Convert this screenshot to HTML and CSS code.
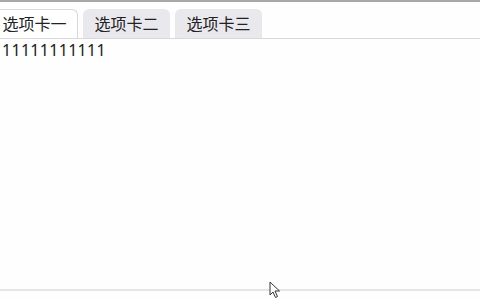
FILE: index.html
```html
<!DOCTYPE html>
<html lang="zh">
<head>
    <meta charset="UTF-8">
    <meta name="viewport" content="width=device-width, initial-scale=1.0">
    <title>选项卡</title>
    <link rel="stylesheet" href="styles.css">
</head>
<body>
    <div class="page">
        <div class="tab-bar">
            <div class="tabs">
                <button class="tab-button active">选项卡一</button>
                <button class="tab-button">选项卡二</button>
                <button class="tab-button">选项卡三</button>
            </div>
        </div>
        <div class="tab-content">11111111111</div>
        <div class="footer-line"></div>
    </div>

    <svg class="cursor" width="12" height="18" viewBox="0 0 12 18">
        <path d="M1 1 L1 14 L4 11 L6.5 16.5 L8.5 15.5 L6 10 L10.5 10 Z" fill="#fff" stroke="#333" stroke-width="1"/>
    </svg>
</body>
</html>
```

FILE: styles.css
```css
* {
    box-sizing: border-box;
    margin: 0;
    padding: 0;
}

body {
    font-family: "Noto Sans", "Noto Sans CJK SC", sans-serif;
    font-size: 16px;
    background: #fdfefd;
    color: #222;
    border-top: 2px solid #a8a8a8;
    height: 300px;
    overflow: hidden;
}

.page {
    display: flex;
    flex-direction: column;
    height: 298px;
}

.tab-bar {
    padding-top: 7px;
    border-bottom: 1px solid #d8d8de;
    overflow: hidden;
}

.tabs {
    display: flex;
    gap: 5px;
    margin-left: -9px;
}

.tab-button {
    font-family: inherit;
    font-size: 16px;
    line-height: 20px;
    padding: 4px 0 5px;
    width: 87px;
    white-space: nowrap;
    text-align: center;
    border: 1px solid #e8e8ec;
    border-bottom: none;
    border-radius: 6px 6px 0 0;
    background: #e9e9ed;
    color: #222;
    margin-bottom: -1px;
}

.tab-button.active {
    background: #fff;
    border-color: #d8d8de;
    position: relative;
}

.tab-content {
    padding: 1px 2px;
    line-height: 20px;
    letter-spacing: 0.3px;
    white-space: nowrap;
    flex: 1;
}

.footer-line {
    height: 2px;
    background: #e4e4ea;
    margin-bottom: 9px;
}

.cursor {
    position: absolute;
    left: 269px;
    top: 281px;
}
```
